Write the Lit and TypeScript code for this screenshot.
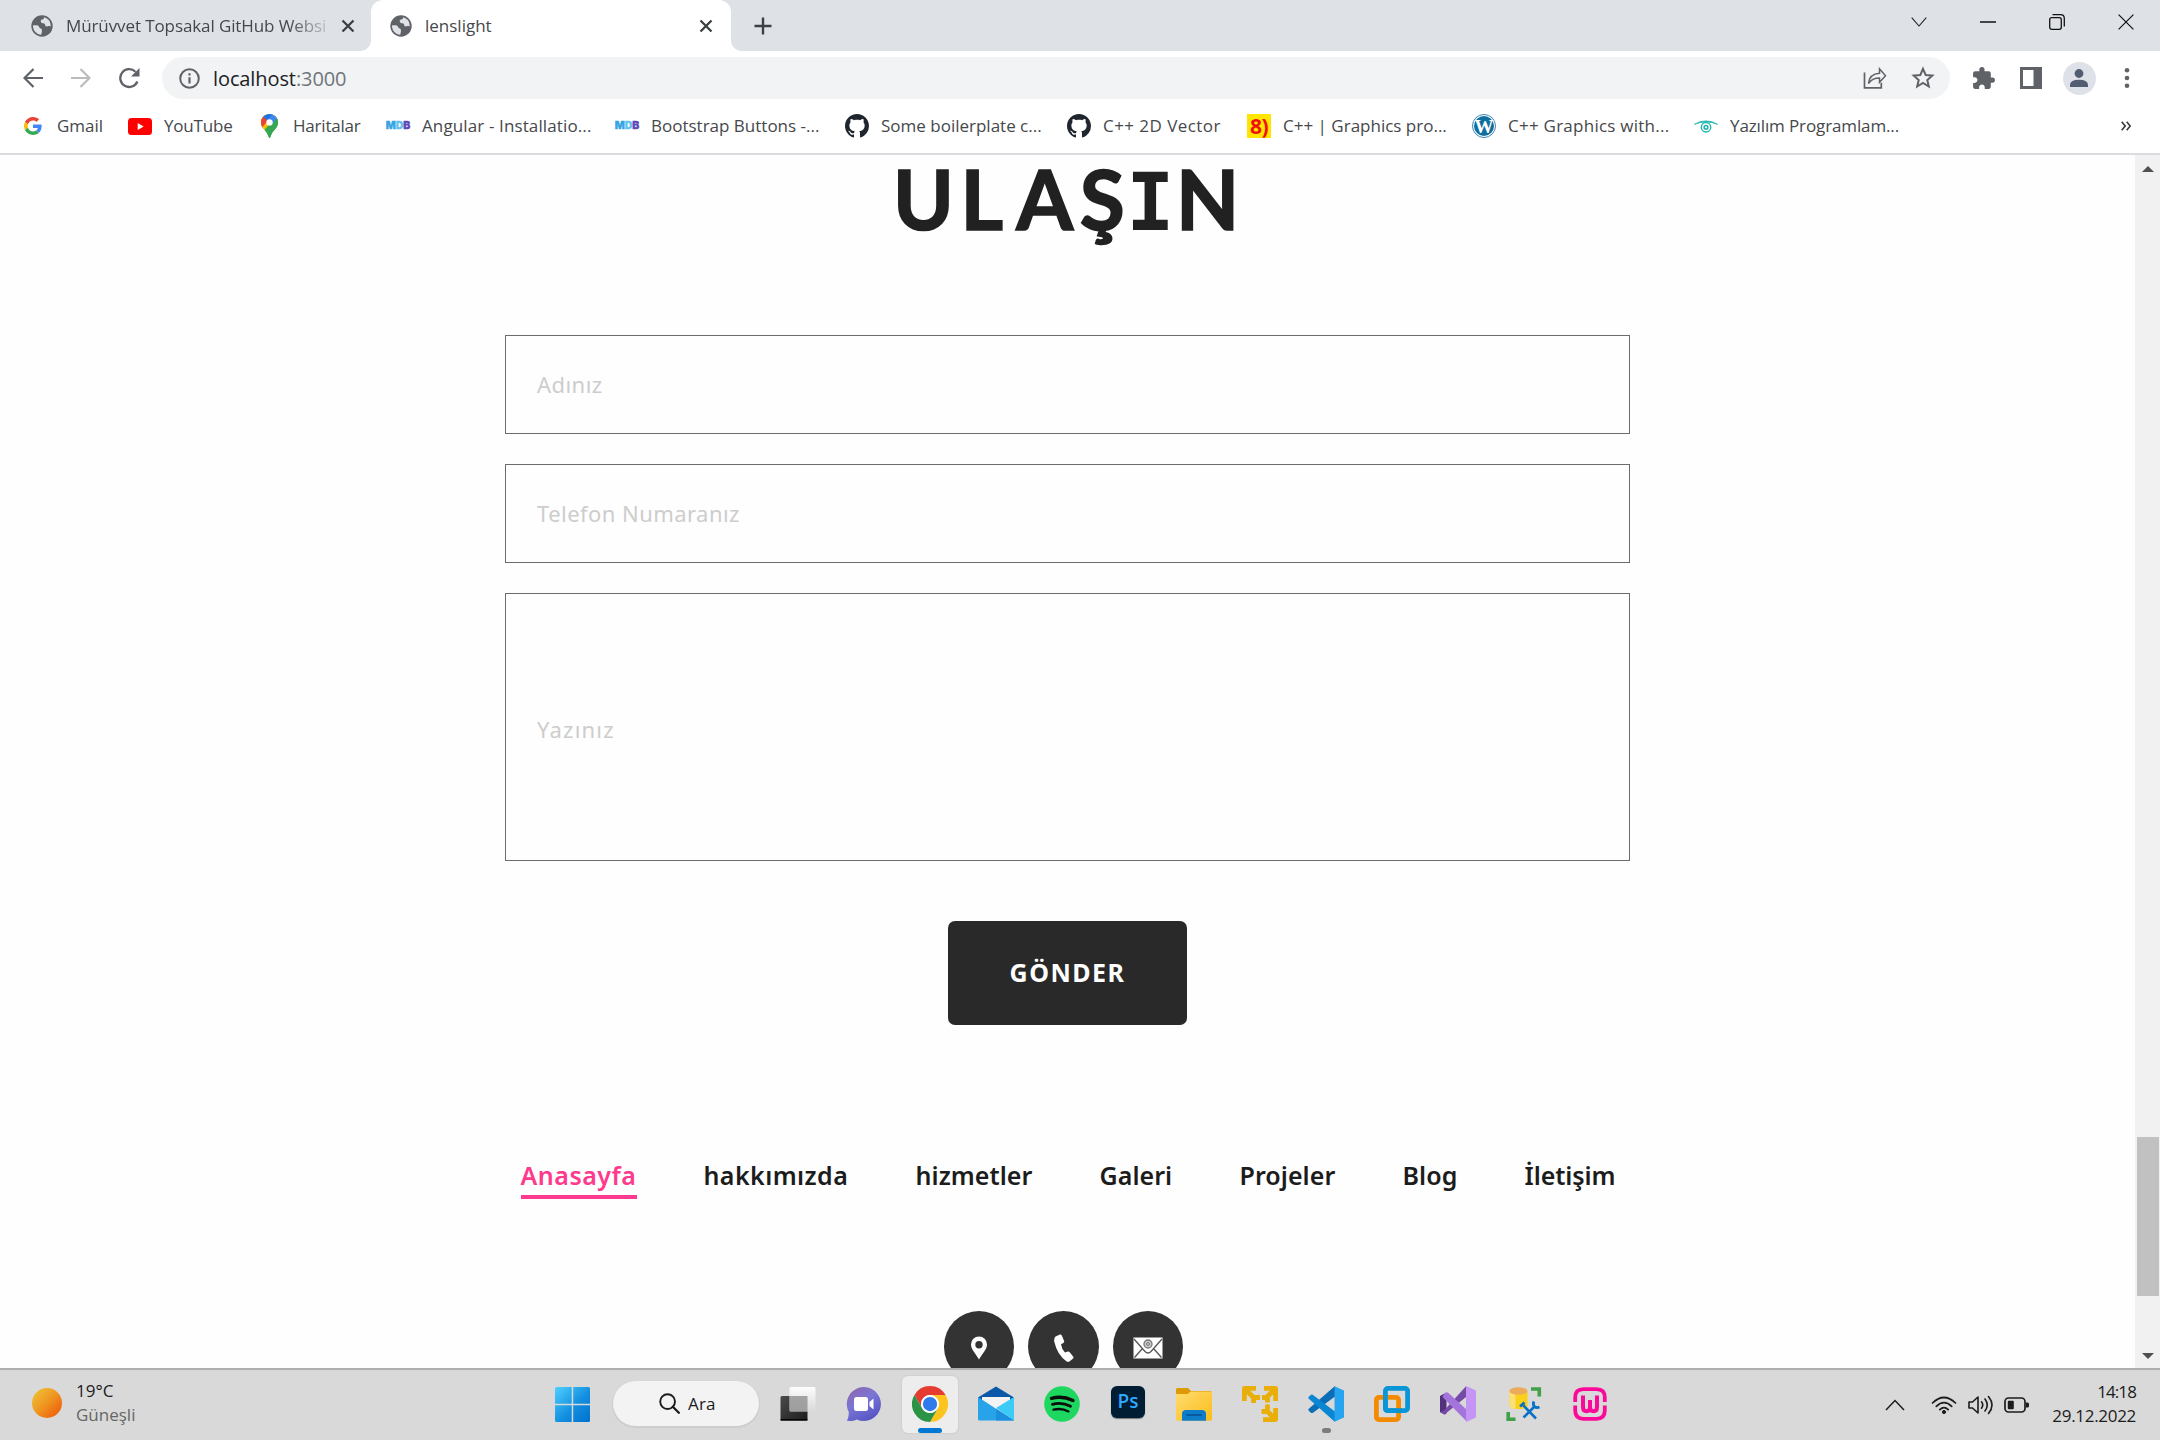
import { LitElement, html, css, TemplateResult } from "lit";
import { customElement } from "lit/decorators.js";

type Icon = TemplateResult;

const globe = html`<svg width="22" height="22" viewBox="0 0 22 22">
  <circle cx="11" cy="11" r="10.7" fill="#5f6368" />
  <path d="M2.3 10.2h3.2c2.2 0 2.6 1.6 3 2.6.4.9 2.4.4 2.4 2v2.1c0 .9-.6 1.2-.6 2.9C5.600 19.500 2 15.600 2 11z" fill="#dfe2e7" />
  <path d="M13 2.300c0 1.600-.5 2.200-1.700 2.200-1.300 0-1.700.9-1.500 2 .2 1.200 1.200 1.800 2.600 1.800 1.300 0 1.600.9 1.800 1.900.3 1.200 1.500 1.400 2.600 1 .8-.3 1.700-.1 2.900.3C20 6.600 17 3.200 13 2.300z" fill="#dfe2e7" />
</svg>`;

const closeX = html`<svg width="14" height="14" viewBox="0 0 14 14"><path d="M1.500 1.500l11 11M12.500 1.500l-11 11" stroke="#3c4043" stroke-width="2.300" /></svg>`;

const google = html`<svg width="18" height="18" viewBox="0 0 48 48">
  <path fill="#EA4335" d="M24 9.500c3.540 0 6.710 1.220 9.210 3.600l6.850-6.850C35.900 2.380 30.470 0 24 0 14.620 0 6.510 5.380 2.560 13.220l7.980 6.190C12.430 13.720 17.740 9.500 24 9.500z" />
  <path fill="#4285F4" d="M46.980 24.550c0-1.570-.15-3.090-.38-4.550H24v9.020h12.940c-.58 2.960-2.260 5.480-4.780 7.180l7.730 6c4.510-4.180 7.090-10.360 7.090-17.650z" />
  <path fill="#FBBC05" d="M10.530 28.590c-.48-1.450-.76-2.990-.76-4.590s.27-3.140.76-4.590l-7.980-6.190C.92 16.460 0 20.120 0 24c0 3.880.92 7.540 2.560 10.780l7.970-6.190z" />
  <path fill="#34A853" d="M24 48c6.480 0 11.930-2.130 15.890-5.810l-7.730-6c-2.150 1.450-4.920 2.300-8.160 2.300-6.260 0-11.570-4.220-13.470-9.910l-7.980 6.190C6.510 42.620 14.620 48 24 48z" />
</svg>`;

const youtube = html`<svg width="24" height="17" viewBox="0 0 24 17"><rect width="24" height="17" rx="3.500" fill="#f00" /><path d="M9.700 5v7l6-3.500z" fill="#fff" /></svg>`;

const maps = html`<svg width="17" height="24" viewBox="0 0 17 24">
  <clipPath id="pin"><path d="M8.500 0C3.800 0 0 3.700 0 8.400c0 2.400 1 4.200 2.400 6 2.200 2.700 4.200 4.500 5.200 8.600.3 1.300 1.500 1.300 1.800 0 1-4.100 3-5.900 5.200-8.600 1.400-1.800 2.400-3.600 2.400-6C17 3.700 13.200 0 8.500 0z" /></clipPath>
  <g clip-path="url(#pin)">
    <path d="M0 0h17v24H0z" fill="#34a853" />
    <path d="M-1 15.500L3 16.500 17 0H-1z" fill="#fbbc04" />
    <path d="M-2 5.500L2 2l5 4.500-5.500 6.500-4-2z" fill="#ea4335" />
    <path d="M2 2.600L6.300 6.300 15 -2H4z" fill="#1a73e8" />
    <path d="M6.300 6.300L13 -2 20 3 10.700 10.500z" fill="#4285f4" />
    <path d="M10.700 10.500L15.800 4 20 8 9 24 3.500 17z" fill="#34a853" />
  </g>
  <circle cx="8.500" cy="8.400" r="3.200" fill="#fff" />
</svg>`;

const mdb = html`<span class="mdb"><b>M</b><i>D</i><u>B</u></span>`;

const github = html`<svg width="24" height="24" viewBox="0 0 16 16"><path fill="#1f262d" d="M8 0C3.580 0 0 3.580 0 8c0 3.540 2.290 6.530 5.470 7.590.4.07.55-.17.55-.38 0-.19-.01-.82-.01-1.490-2.010.37-2.530-.49-2.690-.94-.09-.23-.48-.94-.82-1.130-.28-.15-.68-.52-.01-.53.63-.01 1.080.58 1.230.82.72 1.210 1.870.87 2.330.66.07-.52.28-.87.51-1.070-1.780-.2-3.640-.89-3.640-3.950 0-.87.31-1.590.82-2.150-.08-.2-.36-1.020.08-2.120 0 0 .67-.21 2.200.82.64-.18 1.320-.27 2-.27s1.360.09 2 .27c1.530-1.040 2.200-.82 2.200-.82.44 1.100.16 1.920.08 2.120.51.56.82 1.270.82 2.150 0 3.070-1.870 3.750-3.650 3.950.29.25.54.73.54 1.480 0 1.070-.01 1.930-.01 2.200 0 .21.15.46.55.38A8.010 8.010 0 0 0 16 8c0-4.420-3.580-8-8-8z" /></svg>`;

const eight = html`<span class="eight">8)</span>`;

const wordpress = html`<svg width="24" height="24" viewBox="0 0 24 24">
  <circle cx="12" cy="12" r="11.500" fill="#fff" stroke="#3c86b4" stroke-width="1" />
  <circle cx="12" cy="12" r="10" fill="#0e6f9f" />
  <text x="12" y="18.500" text-anchor="middle" font-family="Liberation Serif, serif" font-weight="700" font-size="19" fill="#fff">W</text>
</svg>`;

const eye = html`<svg width="24" height="13" viewBox="0 0 24 13" fill="none" stroke="#1fb5ad">
  <path d="M.5 4.300Q6 .8 12 .9q6-.1 11.500 3.400Q18 1.900 12 2.100 6 1.900.5 4.300z" fill="#1fb5ad" stroke-width=".8" />
  <circle cx="12" cy="7.300" r="4.700" stroke-width="1.400" /><circle cx="12" cy="7.300" r="1.900" stroke-width="1.500" />
</svg>`;

interface Bookmark { icon: Icon; label: string; pitch: number; spacing: number }

const bookmarks: Bookmark[] = [
  { icon: google, label: "Gmail", pitch: 107, spacing: 0 },
  { icon: youtube, label: "YouTube", pitch: 129, spacing: -0.2 },
  { icon: maps, label: "Haritalar", pitch: 129, spacing: -0.2 },
  { icon: mdb, label: "Angular - Installatio...", pitch: 229, spacing: 0.12 },
  { icon: mdb, label: "Bootstrap Buttons -...", pitch: 230, spacing: 0 },
  { icon: github, label: "Some boilerplate c...", pitch: 222, spacing: 0 },
  { icon: github, label: "C++ 2D Vector", pitch: 180, spacing: 0.45 },
  { icon: eight, label: "C++ | Graphics pro...", pitch: 225, spacing: 0 },
  { icon: wordpress, label: "C++ Graphics with...", pitch: 222, spacing: 0.25 },
  { icon: eye, label: "Yazılım Programlam...", pitch: 210, spacing: -0.12 },
];

const navLinks = [
  { label: "Anasayfa", width: 116, spacing: 0.5 },
  { label: "hakkımızda", width: 145, spacing: 0.42 },
  { label: "hizmetler", width: 117, spacing: 0.05 },
  { label: "Galeri", width: 73, spacing: 0.05 },
  { label: "Projeler", width: 96, spacing: 0.05 },
  { label: "Blog", width: 55, spacing: 0.05 },
  { label: "İletişim", width: 91, spacing: -0.1 },
];

const taskView = html`<svg width="36" height="36" viewBox="0 0 36 36">
  <defs>
    <linearGradient id="tv1" x1="0" y1="0" x2="1" y2="1"><stop offset="0" stop-color="#4b4b4b" /><stop offset="1" stop-color="#1c1c1c" /></linearGradient>
    <linearGradient id="tv2" x1="0" y1="0" x2="0" y2="1"><stop offset="0" stop-color="#fff" /><stop offset="1" stop-color="#d9d9d9" /></linearGradient>
  </defs>
  <rect x=".5" y="10" width="27" height="24.500" rx="1.500" fill="url(#tv1)" />
  <rect x=".5" y="33" width="27" height="1.600" fill="#050505" />
  <rect x="9.500" y="1" width="26" height="24.500" rx="1.500" fill="url(#tv2)" opacity=".93" />
  <path d="M9.500 10h18v15.500h-18z" fill="#8d8d8d" opacity=".75" />
</svg>`;

const chat = html`<svg width="36" height="36" viewBox="0 0 36 36">
  <defs><linearGradient id="ch" x1=".1" y1="0" x2=".7" y2="1"><stop offset="0" stop-color="#8f66ad" /><stop offset=".45" stop-color="#7b76d4" /><stop offset="1" stop-color="#5353c4" /></linearGradient></defs>
  <path d="M18 1a17 17 0 1 1-7.300 32.400C8 34.900 4 35.200.8 34.800 2 33 2.700 30.500 2.800 26A17 17 0 0 1 18 1z" fill="url(#ch)" />
  <rect x="8" y="11" width="14" height="14" rx="2.500" fill="#fff" />
  <path d="M23.500 16l4-3.500v11l-4-3.500z" fill="#fff" />
</svg>`;

const chrome = html`<svg width="36" height="36" viewBox="0 0 48 48">
  <path d="M3.215 12A24 24 0 0 1 44.785 12L24 12A12 12 0 0 0 13.608 30z" fill="#e53b30" />
  <path d="M44.785 12A24 24 0 0 1 24 48L34.392 30A12 12 0 0 0 24 12z" fill="#fcc41c" />
  <path d="M24 48A24 24 0 0 1 3.215 12L13.608 30A12 12 0 0 0 34.392 30z" fill="#2a9346" />
  <circle cx="24" cy="24" r="12" fill="#fff" /><circle cx="24" cy="24" r="9.500" fill="#2f7aec" />
</svg>`;

const mail = html`<svg width="36" height="36" viewBox="0 0 36 36">
  <path d="M0 11.500L18 .5l18 11v12H0z" fill="#0b57a8" />
  <path d="M4 11h28v8L18 26 4 19z" fill="#f3f3f3" />
  <path d="M18 22L36 11v23.500z" fill="#3ccbf7" />
  <path d="M0 11l36 23.500H1.500Q0 34.500 0 33z" fill="#28a3ea" />
  <path d="M18 22.700L36 34.500H18z" fill="#1b8fdc" />
</svg>`;

const spotify = html`<svg width="36" height="36" viewBox="0 0 36 36" fill="none" stroke="#0a0f0b" stroke-linecap="round">
  <circle cx="18" cy="18" r="17.800" fill="#1ed760" stroke="none" />
  <path d="M7.500 12.300q11-3 21.500 2.200" stroke-width="3.400" /><path d="M8.500 18.300q9.500-2.500 18 2" stroke-width="2.800" /><path d="M9.500 23.700q8-2 15 1.700" stroke-width="2.300" />
</svg>`;

const photoshop = html`<span class="ps">Ps</span>`;

const folder = html`<svg width="36" height="36" viewBox="0 0 36 36">
  <defs><linearGradient id="fo" x1="0" y1="0" x2="1" y2="1"><stop offset="0" stop-color="#ffdc6e" /><stop offset="1" stop-color="#fbbc1c" /></linearGradient></defs>
  <path d="M0 3.500Q0 2 1.500 2H12l3 3h19.500Q36 5 36 6.500V12H0z" fill="#dd9a06" />
  <path d="M0 8h11.500L15 5.500h21v27.500q0 1.700-1.500 1.700H1.500Q0 34.700 0 33z" fill="url(#fo)" />
  <path d="M6 34.700V28q0-4 4-4h16q4 0 4 4v6.700z" fill="#0d7ccb" />
  <path d="M11 29h14" stroke="#0b4d8c" stroke-width="1.500" stroke-linecap="round" />
</svg>`;

const vmPlayer = html`<svg width="36" height="36" viewBox="0 0 36 36" fill="none" stroke="#e9ae07" stroke-width="4.800" stroke-linejoin="round">
  <path d="M14 2.400H2.400V15M3 3l8.500 8.500v5.500M11.500 11.500H18M22 2.400h11.600V15M33 3l-7.500 7.500v6M25.500 11.500H20M33.600 22v11.600H21M33 33l-7.500-7.500v-7M25.500 25.500h-6" />
</svg>`;

const vscode = html`<svg width="36" height="36" viewBox="0 0 36 36">
  <path d="M27 0L.8 22.800q-1 1 0 2l2 1.900q1 .8 2.200 0L27 10.500z" fill="#0b6db5" />
  <path d="M27 36L.8 12.800q-1-1 0-2L2.800 9q1-.8 2.200 0L27 25.500z" fill="#0a86d2" />
  <path d="M26.500.2L36 4.500v27l-9.500 4.300z" fill="#26a4ef" />
</svg>`;

const vmWorkstation = html`<svg width="36" height="36" viewBox="0 0 36 36" fill="none" stroke-width="4.800">
  <rect x="11.400" y="2.400" width="22.200" height="22.200" rx="2.500" stroke="#0a95d6" />
  <rect x="2.400" y="11.400" width="22.200" height="22.200" rx="2.500" stroke="#f48a00" />
  <path d="M11.400 8v14q0 2.600 2.600 2.600h14" stroke="#0a95d6" />
</svg>`;

const visualStudio = html`<svg width="36" height="36" viewBox="0 0 36 36">
  <path d="M0 10l4.500-2.500 2 1v19l-2 1L0 26z" fill="#52307c" />
  <path d="M4.500 28.500L0 26l4-1.500L26 .2V11z" fill="#7549a8" />
  <path d="M4.500 7.500Q6 5.500 8.500 7L27 24v11.800L2.500 11z" fill="#a474dc" />
  <path d="M26 0l10 4.500v27L26 36z" fill="#c495f5" />
</svg>`;

const sqlTools = html`<svg width="36" height="36" viewBox="0 0 36 36" fill="none">
  <path d="M3.500 5v14.500q0 3.500 9 3.500t9-3.500V5z" fill="#fbd018" />
  <path d="M3.500 5v14.500q0 3 6 3.400V8z" fill="#fbe076" />
  <ellipse cx="12.500" cy="5" rx="9" ry="3.800" fill="#ecaa5c" />
  <path d="M25 3h8.300v7.500M2.200 26v7.300H9.500" stroke="#42a048" stroke-width="3.600" />
  <path d="M17.500 31.500L29 20M30 32.500L17 19" stroke="#0a71c6" stroke-width="2.600" />
  <path d="M14 20.500l4.500-4M28 15.500q-1.500 3 .5 5t5 .5" stroke="#0a71c6" stroke-width="2.800" />
</svg>`;

const wamp = html`<svg width="36" height="36" viewBox="0 0 36 36" fill="none" stroke="#fb0a9a">
  <path d="M3.200 16v-4.500q0-8.300 8.300-8.300h13q8.300 0 8.300 8.300V16M3.200 19.500v5q0 8.300 8.300 8.300h13q8.300 0 8.300-8.300v-5" stroke-width="3.800" />
  <path d="M11 9.500v11.500q0 4.200 3.500 4.200T18 21v-7M18 21q0 4.200 3.500 4.200T25 21V9.500" stroke-width="4" />
</svg>`;

const windowsLogo = html`<svg width="35" height="35" viewBox="0 0 35 35">
  <defs><linearGradient id="wl" gradientUnits="userSpaceOnUse" x1="0" y1="0" x2="35" y2="35"><stop offset="0" stop-color="#4fd0ff" /><stop offset=".55" stop-color="#1390e0" /><stop offset="1" stop-color="#0070cc" /></linearGradient></defs>
  <path d="M1.500 0h15.200v16.700H0V1.500Q0 0 1.500 0zM18.200 0h15.300Q35 0 35 1.500v15.200H18.200zM0 18.200h16.700V35H1.500Q0 35 0 33.500zM18.200 18.200H35v15.300q0 1.500-1.500 1.500H18.200z" fill="url(#wl)" />
</svg>`;

interface Task { icon: Icon; state?: "active" | "running" }
const tasks: Task[] = [
  { icon: taskView }, { icon: chat }, { icon: chrome, state: "active" }, { icon: mail }, { icon: spotify },
  { icon: photoshop }, { icon: folder }, { icon: vmPlayer }, { icon: vscode, state: "running" },
  { icon: vmWorkstation }, { icon: visualStudio }, { icon: sqlTools }, { icon: wamp },
];

@customElement("browser-chrome")
export class BrowserChrome extends LitElement {
  static styles = css`
    :host { display: block; color: #45484b; font: 17px "Open Sans", "Noto Sans", sans-serif; }
    svg { display: block; flex: none; }
    .strip { display: flex; height: 51px; background: #dee1e6; }
    .tab { display: flex; align-items: center; box-sizing: border-box; height: 51px; white-space: nowrap; }
    .tab.idle { width: 371px; padding: 0 16px 0 31px; }
    .tab.current { position: relative; width: 360px; padding: 0 18px 0 19px; background: #fff; border-radius: 12px 12px 0 0; }
    .tab.current::before, .tab.current::after { content: ""; position: absolute; bottom: 0; width: 10px; height: 10px; }
    .tab.current::before { left: -10px; background: radial-gradient(circle at 0 0, transparent 9.500px, #fff 10px); }
    .tab.current::after { right: -10px; background: radial-gradient(circle at 100% 0, transparent 9.500px, #fff 10px); }
    .title { flex: 1; margin: 0 11px 0 13px; line-height: 24px; }
    .fade { letter-spacing: -0.1px; -webkit-mask-image: linear-gradient(90deg, #000 222px, transparent 270px); mask-image: linear-gradient(90deg, #000 222px, transparent 270px); }
    .plus { display: flex; align-items: center; width: 64px; justify-content: center; }
    .window { display: flex; margin-left: auto; }
    .window span { display: flex; width: 69px; height: 43px; align-items: center; justify-content: center; }
    .toolbar { display: flex; align-items: center; height: 54px; padding: 0 9px; background: #fff; }
    .cell { display: flex; width: 48px; height: 48px; align-items: center; justify-content: center; }
    .omnibox { display: flex; flex: 1; align-items: center; height: 42px; margin: 0 9px; padding: 0 3px 0 17px; border-radius: 21px; background: #f1f3f4; box-sizing: border-box; }
    .url { flex: 1; margin-left: 13px; padding-top: 1px; font-size: 20px; line-height: 28px; letter-spacing: -0.1px; color: #202124; }
    .port { color: #70757a; }
    .avatar { display: flex; width: 33px; height: 33px; border-radius: 50%; background: #dee1e8; justify-content: center; align-items: center; }
    .marks { display: flex; align-items: center; height: 42px; padding: 0 20px 6px 21px; border-bottom: 2px solid #dadce0; background: #fff; }
    .mark { display: flex; align-items: center; flex: none; white-space: nowrap; line-height: 24px; }
    .pic { display: flex; width: 24px; height: 24px; margin-right: 12px; align-items: center; justify-content: center; }
    .more { margin-left: auto; margin-right: 9px; }
    .mdb { font: 900 10.5px/14px Inter, sans-serif; letter-spacing: -0.1px; -webkit-text-stroke: 0.3px currentColor; }
    .mdb b { color: #35a4e2; font-weight: 900; }
    .mdb i { color: #62c3f0; font-style: normal; }
    .mdb u { color: #6247b8; text-decoration: none; }
    .eight { width: 24px; height: 24px; background: #ffe500; color: #f01010; font: bold 21px/24px "Open Sans", sans-serif; text-align: center; letter-spacing: -0.5px; }
  `;

  render() {
    return html`
      <div class="strip">
        <div class="tab idle">${globe}<span class="title fade">Mürüvvet Topsakal GitHub Websi</span>${closeX}</div>
        <div class="tab current">${globe}<span class="title">lenslight</span>${closeX}</div>
        <div class="plus"><svg width="18" height="18" viewBox="0 0 18 18"><path d="M9 .5v17M.5 9h17" stroke="#3c4043" stroke-width="2.400" /></svg></div>
        <div class="window">
          <span><svg width="16" height="10" viewBox="0 0 16 10"><path d="M.7.7L8 9 15.300.7" fill="none" stroke="#222" stroke-width="1.100" /></svg></span>
          <span><svg width="16" height="2" viewBox="0 0 16 2"><path d="M0 1h16" stroke="#111" stroke-width="1.500" /></svg></span>
          <span><svg width="16" height="16" viewBox="0 0 16 16" fill="none" stroke="#111" stroke-width="1.300"><rect x=".7" y="3.700" width="11.600" height="11.600" rx="2" /><path d="M3.500.7h8Q15.300.7 15.300 4.500v8" /></svg></span>
          <span><svg width="16" height="16" viewBox="0 0 16 16"><path d="M.6.6l14.800 14.800M15.400.6L.6 15.400" stroke="#111" stroke-width="1.200" /></svg></span>
        </div>
      </div>
      <div class="toolbar">
        <span class="cell"><svg width="20" height="20" viewBox="0 0 20 20" fill="none" stroke="#5f6368" stroke-width="2.200"><path d="M20 10H2M10.500.9L1.500 10l9 9.100" /></svg></span>
        <span class="cell"><svg width="20" height="20" viewBox="0 0 20 20" fill="none" stroke="#babcbe" stroke-width="2.200"><path d="M0 10h18M9.500.9L18.500 10l-9 9.100" /></svg></span>
        <span class="cell"><svg width="22" height="22" viewBox="0 0 22 22"><path d="M19.400 14.500A8.900 8.900 0 1 1 17.500 4.800" fill="none" stroke="#5f6368" stroke-width="2.300" /><path d="M21.500 1v8.500H13z" fill="#5f6368" /></svg></span>
        <div class="omnibox">
          <svg width="21" height="21" viewBox="0 0 21 21"><circle cx="10.500" cy="10.500" r="9.300" fill="none" stroke="#5f6368" stroke-width="2" /><path d="M10.500 9.300v6.200M10.500 5.300v2.200" stroke="#5f6368" stroke-width="2.200" /></svg>
          <span class="url">localhost<span class="port">:3000</span></span>
          <span class="cell"><svg width="24" height="22" viewBox="0 0 24 22" fill="none" stroke="#5f6368" stroke-width="1.700"><path d="M1.500 5.500v15.300h16.800v-5" /><path d="M5.500 16.500q.8-9.600 11-10.300V1.800l6 6.900-6 6.600v-4.400q-7.500 0-11 5.600z" stroke-width="1.500" /></svg></span>
          <span class="cell"><svg width="24" height="24" viewBox="0 0 24 24"><path d="M12 2.800l2.700 6.200 6.600.6-5 4.400 1.500 6.500L12 17l-5.800 3.500L7.700 14l-5-4.400 6.600-.6z" fill="none" stroke="#5f6368" stroke-width="2" /></svg></span>
        </div>
        <span class="cell"><svg width="25" height="25" viewBox="0 0 24 24"><path fill="#5f6368" d="M20.500 11H19V7c0-1.100-.9-2-2-2h-4V3.500a2.500 2.500 0 0 0-5 0V5H4c-1.100 0-1.990.9-1.990 2v3.800H3.500c1.490 0 2.700 1.210 2.700 2.700s-1.210 2.700-2.700 2.700H2V20c0 1.100.9 2 2 2h3.800v-1.500c0-1.490 1.210-2.700 2.700-2.700 1.490 0 2.700 1.210 2.700 2.700V22H17c1.100 0 2-.9 2-2v-4h1.500a2.500 2.500 0 0 0 0-5z" /></svg></span>
        <span class="cell"><svg width="22" height="22" viewBox="0 0 22 22"><path d="M0 0h22v22H0zM3 3v16h10.500V3z" fill="#5f6368" fill-rule="evenodd" /></svg></span>
        <span class="cell"><span class="avatar"><svg width="18" height="18" viewBox="0 0 18 18" fill="#525d71"><circle cx="9" cy="4.500" r="4.400" /><path d="M0 18v-2.500Q.5 10.800 9 10.800t9 4.700V18z" /></svg></span></span>
        <span class="cell"><svg width="6" height="22" viewBox="0 0 6 22" fill="#5f6368"><circle cx="3" cy="3.200" r="2.300" /><circle cx="3" cy="11" r="2.300" /><circle cx="3" cy="18.800" r="2.300" /></svg></span>
      </div>
      <div class="marks">
        ${bookmarks.map((b) => html`<div class="mark" style="width:${b.pitch}px;letter-spacing:${b.spacing}px"><span class="pic">${b.icon}</span>${b.label}</div>`)}
        <span class="more"><svg width="10" height="10" viewBox="0 0 10 10" fill="none" stroke="#3c4043" stroke-width="1.700"><path d="M.7.8L4.200 5 .7 9.200M5.700.8L9.200 5 5.700 9.200" /></svg></span>
      </div>
    `;
  }
}

@customElement("contact-page")
export class ContactPage extends LitElement {
  static styles = css`
    :host { display: flex; height: 1213px; overflow: hidden; background: #fefefe; font-family: "Noto Sans", sans-serif; }
    .page { flex: 1; display: flex; flex-direction: column; align-items: center; }
    .page > * { flex: none; }
    h1 { display: flex; align-items: baseline; margin: 0; height: 180px; font: bold 82px/86px Lato, sans-serif; letter-spacing: 6.6px; color: #212121; -webkit-text-stroke: 1.6px #212121; padding-left: 4px; }
    .l { letter-spacing: 13px; }
    .serifed { font: bold 80px/86px "DejaVu Sans Mono", monospace; margin: 0 -5px; -webkit-text-stroke-width: 0; }
    form { display: flex; flex-direction: column; align-items: center; width: 1125px; }
    .field { box-sizing: border-box; width: 100%; height: 99px; margin-bottom: 30px; border: 1px solid #6c6c6c; display: flex; align-items: center; padding: 0 0 1px 31px; font-size: 22px; letter-spacing: 0.45px; color: #cdcdcd; }
    .field.tall { height: 268px; margin-bottom: 60px; letter-spacing: 1.200px; padding: 4px 0 0 31px; }
    button { width: 239px; height: 104px; padding: 0 0 3px; border: 0; border-radius: 7px; background: #292929; color: #fff; font: bold 25px "Noto Sans", sans-serif; letter-spacing: 1.5px; }
    nav { display: flex; gap: 67px; margin: 128px 0 0 1px; font-weight: 600; font-size: 25px; line-height: 39px; color: #1c1c1c; }
    nav span { height: 46px; padding-top: 3px; box-sizing: border-box; white-space: nowrap; }
    .on { color: #fd3a8c; border-bottom: 4px solid #fb3a90; }
    .contacts { display: flex; gap: 14px; margin: 112px 8px 0 0; }
    .round { display: flex; align-items: center; justify-content: center; width: 70.500px; height: 71px; border-radius: 50%; background: #333; box-sizing: border-box; padding-top: 3px; }
    .bar { display: flex; flex-direction: column; align-items: center; width: 25px; background: #f1f1f1; box-sizing: border-box; padding: 11px 0 9px; }
    .thumb { width: 22px; height: 159px; margin: 965px 0 auto; background: #c1c1c1; }
  `;

  render() {
    return html`
      <div class="page">
        <h1><span>U</span><span class="l">L</span><span>AŞ</span><span class="serifed">I</span><span>N</span></h1>
        <form>
          <div class="field">Adınız</div>
          <div class="field">Telefon Numaranız</div>
          <div class="field tall">Yazınız</div>
          <button type="button">GÖNDER</button>
        </form>
        <nav>
          ${navLinks.map((n, i) => html`<span class=${i === 0 ? "on" : ""} style="width:${n.width}px;letter-spacing:${n.spacing}px">${n.label}</span>`)}
        </nav>
        <div class="contacts">
          <span class="round"><svg width="18" height="24" viewBox="0 0 18 24"><path d="M9 .5A8 8 0 0 0 1 8.500C1 13 5.500 17.500 9 23.500c3.500-6 8-10.500 8-15A8 8 0 0 0 9 .5zM9 5a3.700 3.700 0 1 1 0 7.400A3.700 3.700 0 0 1 9 5z" fill="#fff" fill-rule="evenodd" /></svg></span>
          <span class="round"><svg width="22" height="28" viewBox="0 0 22 28"><path d="M2.500 2.500L7 .5q1.300-.3 1.800.9l2.300 5.500q.4 1.300-.8 2l-2.300 1.400q.5 4.500 4 8.200l2.700-1q1.200-.3 2 .8l3.600 4.500q.6 1.100-.5 2l-3.400 2.600q-1.200.7-2.700 0Q4.500 21.500 1.200 7.500.9 4 2.500 2.500z" fill="#fff" /></svg></span>
          <span class="round"><svg width="30" height="22" viewBox="0 0 30 22" fill="none" stroke="#555" stroke-width="1.300"><rect x=".5" y=".5" width="29" height="21" fill="#fff" stroke="none" /><path d="M1 2l11 12.500q3 3 6 0L29 2M1.500 20.500l8-9M28.500 20.500l-8-9" /><circle cx="15" cy="7" r="4" fill="#ccc" stroke="#777" /><circle cx="15" cy="7" r="1.500" stroke="#777" stroke-width="1" /></svg></span>
        </div>
      </div>
      <div class="bar">
        <svg width="12" height="6" viewBox="0 0 12 6"><path d="M0 6L6 0l6 6z" fill="#505050" /></svg>
        <div class="thumb"></div>
        <svg width="12" height="6" viewBox="0 0 12 6"><path d="M0 0l6 6 6-6z" fill="#505050" /></svg>
      </div>
    `;
  }
}

@customElement("task-bar")
export class TaskBar extends LitElement {
  static styles = css`
    :host { display: flex; box-sizing: border-box; height: 72px; border-top: 2px solid #aeaeae; background: #d9d9d9; font: 17px/24px "Open Sans", "Noto Sans", sans-serif; color: #1c1c1c; }
    svg { display: block; flex: none; }
    .weather { display: flex; box-sizing: border-box; width: 555px; padding: 9px 0 0 32px; }
    .sun { width: 30px; height: 30px; margin: 9px 14px 0 0; border-radius: 50%; background: linear-gradient(135deg, #eebf33 10%, #ef9420 50%, #ef6a10 80%); }
    .dim { color: #666; }
    .start { padding: 17px 0 0; width: 58px; }
    .search { display: flex; box-sizing: border-box; width: 146px; height: 45px; margin: 11px 6px 0 0; padding-left: 46px; align-items: center; gap: 8px; border-radius: 23px; background: #f3f3f3; box-shadow: 0 1px 1px 1px #cdcdcd; letter-spacing: 0.2px; }
    .app { display: flex; flex-direction: column; align-items: center; width: 56px; height: 57px; margin: 6px 5px 0; border-radius: 6px; box-sizing: border-box; padding-top: 10px; }
    .app.active { background: #ededed; box-shadow: 0 0 1px 1px #d0d0d0; }
    .app::after { content: ""; height: 5px; border-radius: 3px; margin-top: 6px; }
    .app.active::after { width: 24px; background: #0078d4; }
    .app.running::after { width: 9px; background: #7c7c7c; }
    .ps { box-sizing: border-box; width: 34px; height: 32px; margin-bottom: 4px; border-radius: 6px; background: #001d34; color: #31a8ff; font: 600 19px/30px "Open Sans", sans-serif; text-align: center; box-shadow: 0 1px 1px #777; }
    .tray { display: flex; align-items: center; margin: 0 12px 0 auto; height: 70px; }
    .clock { width: 106px; padding-right: 12px; text-align: right; letter-spacing: -0.3px; margin-bottom: 3px; }
    .time { letter-spacing: -0.9px; }
    .up { margin-right: 26px; }
    .wifi, .sound { margin-right: 11px; }
  `;

  render() {
    return html`
      <div class="weather"><div class="sun"></div><div><div>19°C</div><div class="dim">Güneşli</div></div></div>
      <div class="start">${windowsLogo}</div>
      <div class="search"><svg width="21" height="21" viewBox="0 0 21 21" fill="none" stroke="#1c1c1c" stroke-width="1.900"><circle cx="8.600" cy="8.600" r="7.400" /><path d="M13.800 13.800l6 6" stroke-width="2.300" stroke-linecap="round" /></svg><span>Ara</span></div>
      ${tasks.map((t) => html`<div class="app ${t.state ?? ""}">${t.icon}</div>`)}
      <div class="tray">
        <svg class="up" width="20" height="12" viewBox="0 0 20 12"><path d="M1 11l9-9.500 9 9.500" fill="none" stroke="#1c1c1c" stroke-width="1.500" /></svg>
        <svg class="wifi" width="26" height="20" viewBox="0 0 26 20" fill="none" stroke="#1c1c1c" stroke-width="1.700" stroke-linecap="round"><path d="M1.500 8q11.500-11 23 0M5.300 11.300q7.700-7.300 15.400 0M8.800 14.600q4.200-4 8.400 0" /><circle cx="13" cy="17" r="1.600" fill="#1c1c1c" stroke-width="1" /></svg>
        <svg class="sound" width="25" height="20" viewBox="0 0 25 20" fill="none" stroke="#1c1c1c" stroke-width="1.600" stroke-linecap="round" stroke-linejoin="round"><path d="M1 7h3.500L10 2v16l-5.500-5H1zM13.500 6.800q2.500 3.200 0 6.400M17 4q4.500 6 0 12M20.500 1.500q7 8.500 0 17" /></svg>
        <svg width="26" height="16" viewBox="0 0 26 16"><rect x="1" y="1" width="20" height="14" rx="3.500" fill="none" stroke="#1c1c1c" stroke-width="1.700" /><rect x="3.800" y="3.800" width="6" height="8.400" rx="1" fill="#1c1c1c" /><path d="M22 5.500h1.500q1.500 0 1.500 1.500v2q0 1.500-1.500 1.500H22z" fill="#1c1c1c" /></svg>
        <div class="clock"><div class="time">14:18</div><div>29.12.2022</div></div>
      </div>
    `;
  }
}

@customElement("app-root")
export class AppRoot extends LitElement {
  static styles = css`
    :host { display: flex; flex-direction: column; width: 2160px; height: 1440px; overflow: hidden; background: #fff; }
  `;
  render() {
    return html`<browser-chrome></browser-chrome><contact-page></contact-page><task-bar></task-bar>`;
  }
}
